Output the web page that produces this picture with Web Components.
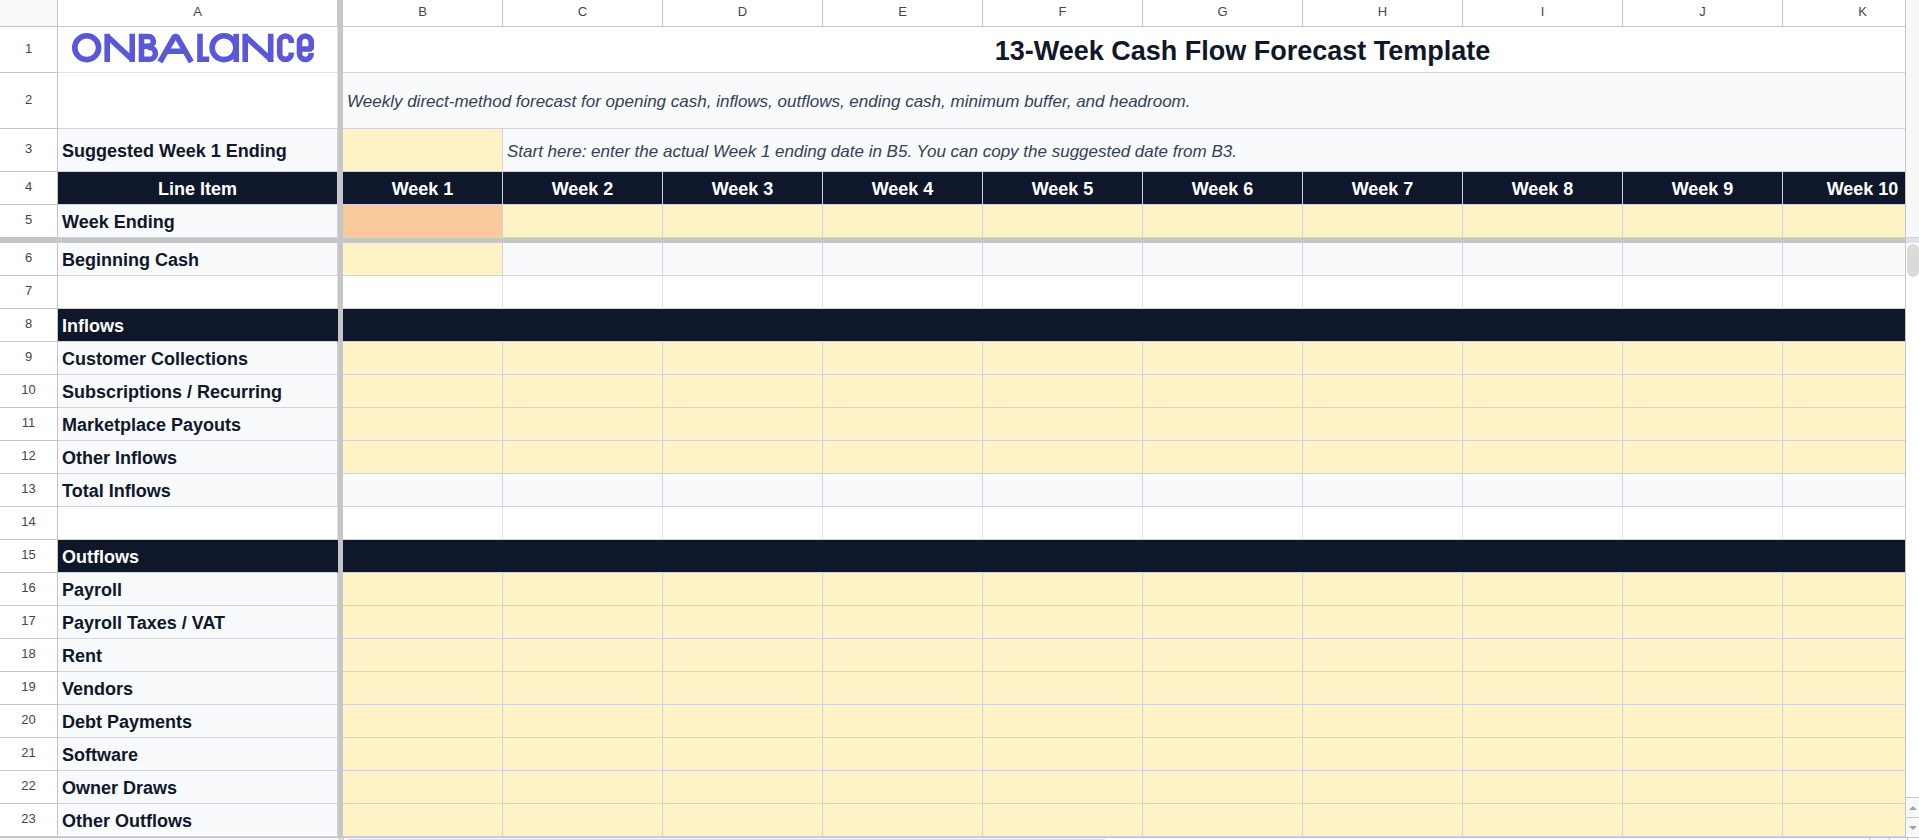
<!DOCTYPE html>
<html lang="en">
<head>
<meta charset="utf-8">
<title>13-Week Cash Flow Forecast Template</title>
<style>
html, body { margin: 0; height: 100%; background: #fff; overflow: hidden; }
</style>
</head>
<body>
<forecast-app></forecast-app>

<script>
class BrandLogo extends HTMLElement {
  connectedCallback() {
    this.attachShadow({ mode: 'open' }).innerHTML = `
      <style>
        :host { display: block; padding: 0 0 4px 14px; line-height: 0; }
        svg { display: block; }
        g { fill: none; stroke: #5b57d9; stroke-width: 5.6; stroke-linejoin: bevel; }
      </style>
      <svg width="242" height="30" viewBox="0 0 242 30" role="img" aria-label="OnBalance">
        <g>
          <circle cx="14.700" cy="14.700" r="11.900"/>
          <path d="M35.200 29V.8M60.200 29V.8M35 3L60.400 26.800"/>
          <path d="M69.500 .8V29M69 3.500H76.500a4.500 4.500 0 0 1 0 9.800H69M76 14.500H77.500a5.800 5.800 0 0 1 0 11.800H69"/>
          <path d="M88 29L102.500 3.500H104.800L119.300 29M94 18.300H113"/>
          <path d="M128 .8V26.200H137.200" stroke-linejoin="miter" style="stroke-linejoin:miter"/>
          <circle cx="152" cy="14.700" r="11.900"/>
          <path d="M164.200 .8V29"/>
          <path d="M173.200 29V.8M198.700 29V.8M173 3L198.900 26.800"/>
          <path d="M219.300 10V8.800a5.800 5.800 0 0 0-11.600 0V20.600a5.800 5.800 0 0 0 11.600 0V19.400"/>
          <path d="M227 16H239.200V8.800a5.800 5.800 0 0 0-11.700 0V20.600a5.800 5.800 0 0 0 11.700 0V20"/>
        </g>
      </svg>`;
  }
}
customElements.define('brand-logo', BrandLogo);

class ScrollRail extends HTMLElement {
  connectedCallback() {
    this.attachShadow({ mode: 'open' }).innerHTML = `
      <style>
        :host { display: flex; flex-direction: column; box-sizing: border-box; width: 14px; border-left: 1px solid #c6c6c6; background: #fff; }
        .top { height: 237px; background: #f8f8f8; border-bottom: 1px solid #d0d0d8; }
        .bar { height: 5px; background: #e0e0e8; }
        .thumb { width: 12px; height: 33px; margin: 1px 0 0 1px; border-radius: 6px; background: #dadada; }
        .gap { flex: 1; }
        button { display: flex; align-items: center; justify-content: center; width: 100%; height: 20px; padding: 0; border: 0; border-top: 1px solid #c6c6c6; background: #f8f8f8; }
      </style>
      <div class="top"></div><div class="bar"></div><div class="thumb"></div><div class="gap"></div>
      <button aria-label="Scroll up"><svg width="8" height="4"><path d="M0 4L4 0L8 4Z" fill="#9aa5a5"/></svg></button>
      <button aria-label="Scroll down"><svg width="8" height="4"><path d="M0 0L4 4L8 0Z" fill="#9aa5a5"/></svg></button>`;
  }
}
customElements.define('scroll-rail', ScrollRail);

class SheetGrid extends HTMLElement {
  connectedCallback() {
    const letters = 'BCDEFGHIJK'.split('');
    const each = (n, f) => Array.from({ length: n }, (_, i) => f(i)).join('');
    const row = (n, h, a, cells) =>
      `<tr style="height:${h}px"><th class="num" scope="row">${n}</th>${a}<td class="split"></td>${cells}</tr>`;
    const label = t => `<th class="label" scope="row">${t}</th>`;
    const fill = cls => each(11, () => `<td class="${cls}"></td>`);
    const section = (n, t) => row(n, 33, `<th class="label dark section" scope="row">${t}</th>`, '<td class="dark" colspan="11"></td>');
    const inputs = (from, names) => names.map((t, i) => row(from + i, 33, label(t), fill('input'))).join('');

    this.attachShadow({ mode: 'open' }).innerHTML = `
      <style>
        :host { display: block; overflow: hidden; font-family: "Liberation Sans", Arial, sans-serif; color: #0f172a; }
        table { table-layout: fixed; width: 2143px; border-collapse: separate; border-spacing: 0; }
        .c-num { width: 58px; } .c-label { width: 280px; } .c-split { width: 5px; } .c-week { width: 160px; } .c-last { width: 200px; }
        th, td { box-sizing: border-box; padding: 0; border: 0 solid #d0d3dc; border-width: 0 1px 1px 0; font-size: 18px; line-height: 22px; white-space: nowrap; overflow: hidden; }
        .num, .letter, .corner { font-size: 13px; font-weight: 400; line-height: 16px; color: #444746; border-color: #c4c4c4; text-align: center; background: #fff; }
        .num, .letter { padding-bottom: 2px; }
        .corner { background: #f8f9fb; }
        td.split { background: #c6c6c6; border: 0; }
        .label { text-align: left; padding-left: 4px; padding-top: 1px; background: #f8fafc; }
        .plain { background: #fff; border-right-color: #e1e1e1; }
        .logo { border-bottom-color: #e1e1e1; }
        .calc { background: #f8fafc; }
        .input { background: #fef2c7; }
        .start { background: #f9cb9c; }
        .dark { background: #0f172a; color: #fff; }
        .section { border-right-color: #0f172a; }
        .head { text-align: center; padding-top: 1px; }
        .title { font-size: 27px; line-height: 30px; text-align: center; padding-top: 2px; }
        .note { font-size: 17px; font-style: italic; color: #334155; padding-left: 4px; padding-top: 3px; background: #f8fafc; }
        .freeze td { height: 5px; background: #c6c6c6; border: 0; }
      </style>
      <table>
        <colgroup><col class="c-num"><col class="c-label"><col class="c-split">${each(10, () => '<col class="c-week">')}<col class="c-last"></colgroup>
        <thead>
          <tr style="height:27px"><td class="corner"></td><th class="letter" scope="col">A</th><td class="split"></td>${letters.map(l => `<th class="letter" scope="col">${l}</th>`).join('')}<td class="letter"></td></tr>
        </thead>
        <tbody>
          ${row(1, 46, '<td class="plain logo"><brand-logo></brand-logo></td>', '<th class="title" colspan="11">13-Week Cash Flow Forecast Template</th>')}
          ${row(2, 56, '<td class="plain"></td>', '<td class="note" colspan="11">Weekly direct-method forecast for opening cash, inflows, outflows, ending cash, minimum buffer, and headroom.</td>')}
          ${row(3, 43, label('Suggested Week 1 Ending'), '<td class="input"></td><td class="note" colspan="10">Start here: enter the actual Week 1 ending date in B5. You can copy the suggested date from B3.</td>')}
          ${row(4, 33, '<th class="dark head" scope="col">Line Item</th>', each(10, i => `<th class="dark head" scope="col">Week ${i + 1}</th>`) + '<td class="dark"></td>')}
          ${row(5, 33, label('Week Ending'), '<td class="start"></td>' + each(10, () => '<td class="input"></td>'))}
          <tr class="freeze"><td colspan="14"></td></tr>
          ${row(6, 33, label('Beginning Cash'), '<td class="input"></td>' + each(10, () => '<td class="calc"></td>'))}
          ${row(7, 33, '<td class="plain"></td>', fill('plain'))}
          ${section(8, 'Inflows')}
          ${inputs(9, ['Customer Collections', 'Subscriptions / Recurring', 'Marketplace Payouts', 'Other Inflows'])}
          ${row(13, 33, label('Total Inflows'), fill('calc'))}
          ${row(14, 33, '<td class="plain"></td>', fill('plain'))}
          ${section(15, 'Outflows')}
          ${inputs(16, ['Payroll', 'Payroll Taxes / VAT', 'Rent', 'Vendors', 'Debt Payments', 'Software', 'Owner Draws', 'Other Outflows'])}
        </tbody>
      </table>`;
  }
}
customElements.define('sheet-grid', SheetGrid);

class ForecastApp extends HTMLElement {
  connectedCallback() {
    this.attachShadow({ mode: 'open' }).innerHTML = `
      <style>
        :host { display: grid; grid-template-columns: minmax(0, 1fr) 14px; }
        .foot { grid-column: 1 / -1; display: flex; height: 3px; box-sizing: border-box; border-top: 1px solid #c4c4c4; background: #fff; }
        .left { width: 338px; background: #f8f8f8; }
        .split { width: 5px; background: #dcdcdc; border-right: 1px solid #c6c6c6; }
        .thumb { width: 757px; height: 1px; margin: 1px auto 0 4px; background: #dadada; }
        .step { box-sizing: border-box; width: 20px; border-left: 1px solid #c6c6c6; background: #f8f8f8; }
        .end { box-sizing: border-box; width: 12px; margin-left: -2px; border-left: 1px solid #c6c6c6; }
      </style>
      <sheet-grid></sheet-grid>
      <scroll-rail></scroll-rail>
      <div class="foot"><div class="left"></div><div class="split"></div><div class="thumb"></div><div class="step"></div><div class="step"></div><div class="end"></div></div>`;
  }
}
customElements.define('forecast-app', ForecastApp);
</script>
</body>
</html>
